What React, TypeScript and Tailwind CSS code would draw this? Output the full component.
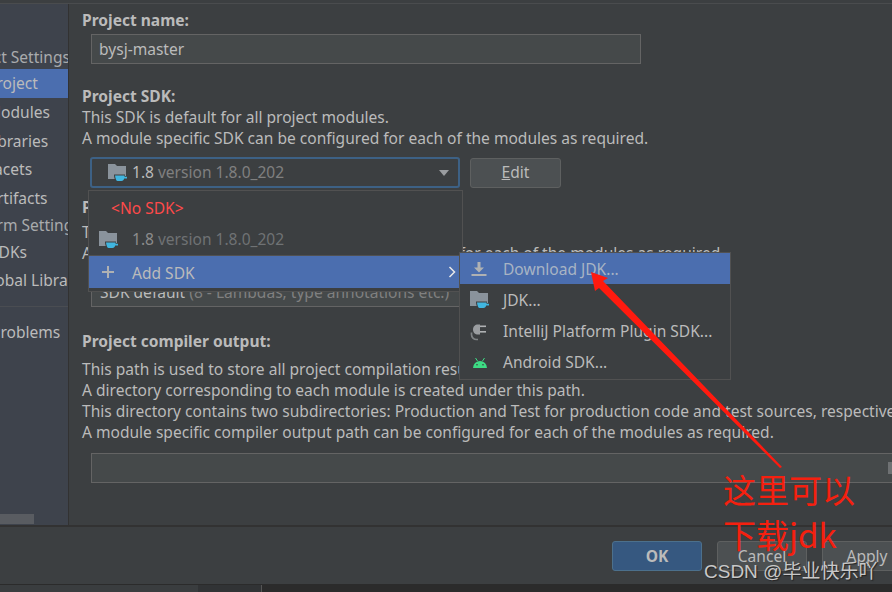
const font = { fontFamily: '"Noto Sans", "Noto Sans CJK SC", sans-serif' };

function JdkIcon({ className }: { className?: string }) {
  return (
    <svg viewBox="0 0 20 18" className={className}>
      <path d="M0 0h7l2 2h9v13H0z" fill="#8a939c" />
      <path d="M6 10.500h11v1.500h3v3.500h-3c-.5 1-1.500 2.500-3 2.500H10c-2 0-4-2.500-4-7.500z" fill="#3c3f41" />
      <path d="M7 11.500h9.500v1.300h2.500v1.700h-2.800c-.4 1.200-1.200 2.500-2.700 2.500h-3.500C8.500 17.500 7.500 15 7 11.500z" fill="#40b6e0" />
    </svg>
  );
}

function DownloadIcon() {
  return (
    <svg viewBox="0 0 16 16" className="w-4 h-4">
      <path d="M6.500 1h3v5.500H13L8 11.500 3 6.500h3.500z" fill="#afb1b3" />
      <rect x="0.500" y="13" width="15" height="2" fill="#afb1b3" />
    </svg>
  );
}

function PlugIcon() {
  return (
    <svg viewBox="0 0 18 18" className="w-[18px] h-[18px]">
      <path d="M8 16.500H6.500a5 5 0 0 1-5-5V9.500" fill="none" stroke="#7f8385" strokeWidth="1.700" />
      <path d="M8 1.500h2v10H8c-3 0-5-2-5-5s2-5 5-5z" fill="#9a9da0" />
      <rect x="10" y="2.500" width="6" height="1.600" fill="#afb1b3" />
      <rect x="10" y="8" width="6" height="1.600" fill="#afb1b3" />
    </svg>
  );
}

function AndroidIcon() {
  return (
    <svg viewBox="0 0 16 12" className="w-4 h-3">
      <path d="M1 11a7 7 0 0 1 14 0z" fill="#3ddc84" />
      <path d="M3.500 1l2 3M12.500 1l-2 3" stroke="#3ddc84" strokeWidth="1" />
      <circle cx="5" cy="7.800" r=".8" fill="#3c3f41" />
      <circle cx="11" cy="7.800" r=".8" fill="#3c3f41" />
    </svg>
  );
}

function SideItem({ label, offset, active, height }: { label: string; offset: string; active?: boolean; height: string }) {
  return (
    <div className={`${height} flex items-center whitespace-nowrap ${active ? "bg-[#4b6eaf]" : ""}`}>
      <span className={offset}>{label}</span>
    </div>
  );
}

function Field({ children, className }: { children?: React.ReactNode; className?: string }) {
  return (
    <div className={`h-[30px] ml-[9px] bg-[#45494a] border border-[#646464] flex items-center ${className ?? ""}`}>
      {children}
    </div>
  );
}

export default function App() {
  return (
    <div
      style={font}
      className="relative w-[892px] h-[592px] overflow-hidden flex flex-col bg-[#3c3f41] text-[15.55px] leading-[21px] text-[#bbbbbb]"
    >
      <div className="h-[4px] border-b border-[#4a4c4e] shrink-0" />

      <div className="flex h-[521px] shrink-0">
        {/* left tree, text clipped on the left like the picture */}
        <div className="w-[69px] shrink-0 bg-[#3e434c] border-r border-[#323232] overflow-hidden flex flex-col pt-[41px] relative">
          <SideItem height="h-[24px]" label="Project Settings" offset="-ml-[44px] text-[#a9abad]" />
          <SideItem height="h-[29px]" label="Project" offset="-ml-[13px]" active />
          <SideItem height="h-[29px]" label="Modules" offset="-ml-[13px]" />
          <SideItem height="h-[28px]" label="Libraries" offset="-ml-[15px]" />
          <SideItem height="h-[29px]" label="Facets" offset="-ml-[14px]" />
          <SideItem height="h-[28px]" label="Artifacts" offset="-ml-[13px]" />
          <SideItem height="h-[27px]" label="Platform Settings" offset="-ml-[46px] text-[#a9abad]" />
          <SideItem height="h-[26px]" label="SDKs" offset="-ml-[10px]" />
          <SideItem height="h-[30px]" label="Global Libraries" offset="-ml-[20px]" />
          <div className="h-px bg-[#4a4d52] mt-[11px]" />
          <div className="h-[28px] mt-[11px] flex items-center">
            <span className="-ml-[9px]">Problems</span>
          </div>
          <div className="absolute left-0 bottom-[1px] w-[34px] h-[10px] bg-[#595c61]" />
        </div>

        {/* right form */}
        <div className="flex-1 min-w-0 pl-[13px] pt-[6px] whitespace-nowrap">
          <div className="font-bold">Project name:</div>
          <Field className="w-[550px] mt-[3px]">
            <span className="ml-[7px]">bysj-master</span>
          </Field>

          <div className="font-bold mt-[22px]">Project SDK:</div>
          <div>This SDK is default for all project modules.</div>
          <div>A module specific SDK can be configured for each of the modules as required.</div>

          <div className="flex items-center mt-[8px] ml-[8px] gap-[10px]">
            <div className="w-[370px] h-[31px] bg-[#3c3f41] border-2 border-[#3d6185] rounded-[3px] flex items-center pl-[16px] pr-[8px]">
              <JdkIcon className="w-[20px] h-[18px] mr-[4px]" />
              <span>1.8</span>
              <span className="ml-[4px] text-[#808080]">version 1.8.0_202</span>
              <svg viewBox="0 0 12 8" className="w-[12px] h-[8px] ml-auto">
                <path d="M1 1h10L6 7z" fill="#9a9da0" />
              </svg>
            </div>
            <div className="w-[91px] h-[30px] bg-[#4c5052] border border-[#5e6060] rounded-[3px] flex items-center justify-center">
              <span className="underline">E</span>dit
            </div>
          </div>

          <div className="font-bold mt-[9px]">Project language level:</div>
          <div className="mt-[4px]">This language level will be used for all modules.</div>
          <div>A module specific language level can be configured for each of the modules as required.</div>
          <Field className="w-[550px] mt-[13px]">
            <span className="ml-[8px]">
              SDK default <span className="text-[#808080]">(8 - Lambdas, type annotations etc.)</span>
            </span>
          </Field>

          <div className="font-bold mt-[24px]">Project compiler output:</div>
          <div className="mt-[7px]">This path is used to store all project compilation results.</div>
          <div>A directory corresponding to each module is created under this path.</div>
          <div>This directory contains two subdirectories: Production and Test for production code and test sources, respectively.</div>
          <div>A module specific compiler output path can be configured for each of the modules as required.</div>
          <Field className="mt-[10px] -mr-[12px] justify-end pr-px">
            <svg viewBox="0 0 14 12" className="w-[14px] h-[12px]">
              <path d="M0 0h5l2 2h7v10H0z" fill="#6e7173" />
            </svg>
          </Field>
        </div>
      </div>

      {/* footer */}
      <div className="h-[59px] shrink-0 border-t-2 border-[#323232] flex justify-start pl-[612px] pt-[14px] gap-[15px]">
        <div className="w-[90px] h-[30px] shrink-0 bg-[#365880] border border-[#4c708c] rounded-[3px] flex items-center justify-center font-bold">
          OK
        </div>
        <div className="w-[90px] h-[30px] shrink-0 bg-[#4c5052] border border-[#5e6060] rounded-[3px] flex items-center justify-center">
          Cancel
        </div>
        <div className="w-[90px] h-[30px] shrink-0 bg-[#4c5052] border border-[#5e6060] rounded-[3px] flex items-center justify-center">
          Apply
        </div>
      </div>
      <div className="flex-1 flex border-t border-[#2b2b2b]">
        <div className="w-[198px] bg-[#3a3d3f]" />
        <div className="w-[64px] bg-[#313335] border-r border-[#555555]" />
        <div className="flex-1 bg-[#2b2b2b]" />
      </div>

      {/* sdk dropdown */}
      <div className="absolute left-[88px] top-[190px] w-[375px] h-[102px] bg-[#3c3f41] border border-[#515151] flex flex-col">
        <div className="h-[33px] flex items-center pl-[22px] pt-px text-[#ff4a4a]">&lt;No SDK&gt;</div>
        <div className="h-[32px] flex items-center pl-[10px] border-b border-[#515151]">
          <JdkIcon className="w-[20px] h-[18px] mr-[13px]" />
          <span className="text-[#8c8c8c]">1.8</span>
          <span className="ml-[4px] text-[#6f7274]">version 1.8.0_202</span>
        </div>
        <div className="h-[32px] bg-[#4b6eaf] flex items-center pl-[12px] pr-[6px]">
          <svg viewBox="0 0 14 14" className="w-[14px] h-[14px] mr-[17px]">
            <path d="M6 1h2v5h5v2H8v5H6V8H1V6h5z" fill="#afb1b3" />
          </svg>
          <span className="text-[#bbbbbb] pt-[2px]">Add SDK</span>
          <svg viewBox="0 0 8 12" className="w-[8px] h-[12px] ml-auto">
            <path d="M1.500 1l5 5-5 5" fill="none" stroke="#e8e8e8" strokeWidth="1.500" />
          </svg>
        </div>
      </div>

      {/* add sdk submenu */}
      <div className="absolute left-[459px] top-[252px] w-[272px] h-[128px] bg-[#3c3f41] border border-[#515151] flex flex-col">
        <div className="h-[31px] bg-[#4b6eaf] flex items-center pl-[11px] gap-[16px]">
          <DownloadIcon />
          <span className="text-[#a8b4c4] pt-[2px]">Download JDK...</span>
        </div>
        <div className="h-[32px] flex items-center pl-[10px] gap-[13px]">
          <JdkIcon className="w-[20px] h-[18px]" />
          <span>JDK...</span>
        </div>
        <div className="h-[31px] flex items-center pl-[10px] gap-[15px]">
          <PlugIcon />
          <span>IntelliJ Platform Plugin SDK...</span>
        </div>
        <div className="h-[31px] flex items-center pl-[12px] gap-[15px]">
          <AndroidIcon />
          <span>Android SDK...</span>
        </div>
      </div>

      {/* red annotation drawn over the screenshot */}
      <svg viewBox="0 0 892 592" className="absolute inset-0 w-[892px] h-[592px] pointer-events-none">
        <path d="M591 272L608 278L603 281L782 467L780 468L599 288L595 291z" fill="#ff1a0f" />
      </svg>
      <div className="absolute left-[723px] top-[467px] text-[33px] leading-[45px] text-[#f5200f]" style={{ fontFamily: '"Noto Sans CJK SC", sans-serif' }}>
        <div>这里可以</div>
        <div>下载jdk</div>
      </div>
      <div
        className="absolute left-[704px] top-[559px] text-[19px] leading-[26px] text-[#c8c8c8] [text-shadow:1px_1px_1px_#222222]"
        style={{ fontFamily: '"Liberation Sans", "Noto Sans CJK SC", sans-serif' }}
      >
        CSDN @毕业快乐吖
      </div>
    </div>
  );
}
